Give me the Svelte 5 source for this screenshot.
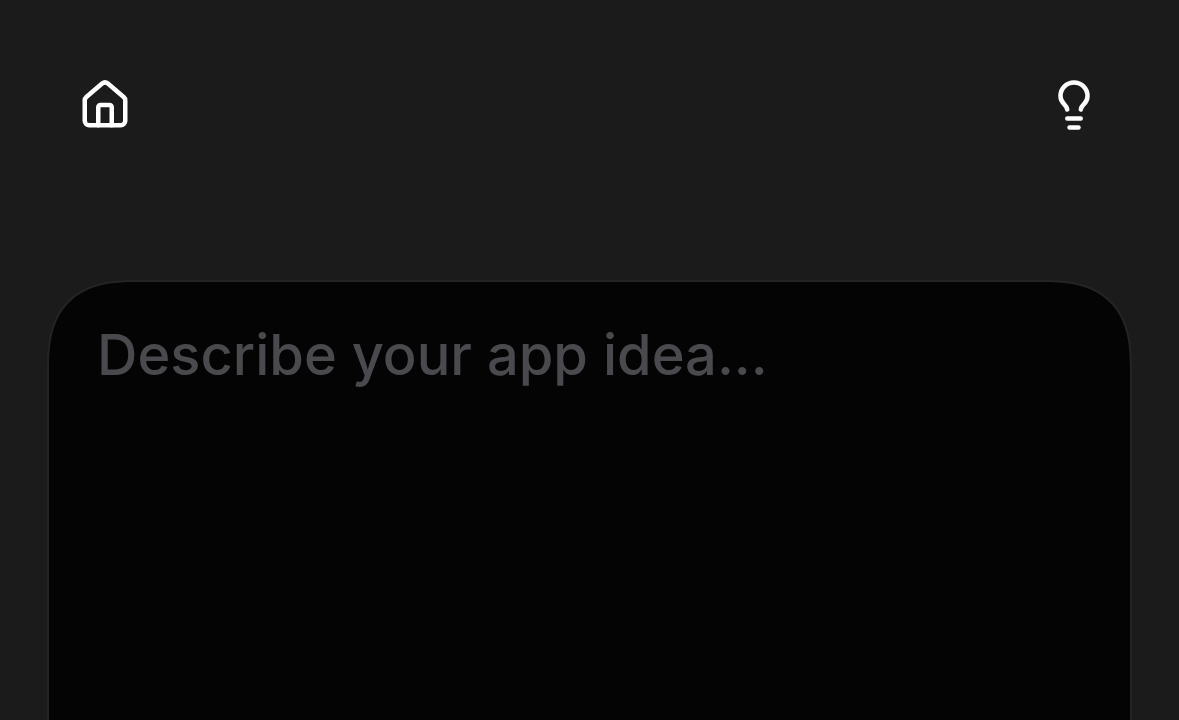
<script lang="ts">
	let idea = $state('');
</script>

<main>
	<header>
		<button type="button" aria-label="Home">
			<svg viewBox="0 0 24 24" aria-hidden="true">
				<path d="M15 21v-8a1 1 0 0 0-1-1h-4a1 1 0 0 0-1 1v8" />
				<path
					d="M3 10a2 2 0 0 1 .709-1.528l7-5.999a2 2 0 0 1 2.582 0l7 5.999A2 2 0 0 1 21 10v9a2 2 0 0 1-2 2H5a2 2 0 0 1-2-2z"
				/>
			</svg>
		</button>
		<button type="button" aria-label="Ideas">
			<svg viewBox="0 0 24 24" aria-hidden="true">
				<path
					d="M15 14c.2-1 .7-1.7 1.5-2.5 1-.9 1.5-2.2 1.5-3.5A6 6 0 0 0 6 8c0 1 .2 2.2 1.5 3.5.7.7 1.3 1.5 1.5 2.5"
				/>
				<path d="M9 18h6" />
				<path d="M10 22h4" />
			</svg>
		</button>
	</header>
	<textarea aria-label="App idea" placeholder="Describe your app idea..." bind:value={idea}></textarea>
</main>

<style>
	:global(body) {
		margin: 0;
		background-color: #1b1b1b;
	}
	main {
		display: flex;
		flex-direction: column;
		min-height: 100vh;
		box-sizing: border-box;
		padding: 78px 47px 0;
		background-color: #1b1b1b;
	}
	header {
		display: flex;
		justify-content: space-between;
		padding: 0 31px;
		margin-bottom: 148px;
	}
	button {
		display: flex;
		padding: 0;
		border: none;
		background: none;
		color: white;
		cursor: pointer;
	}
	svg {
		width: 54px;
		height: 54px;
		fill: none;
		stroke: currentColor;
		stroke-width: 2;
		stroke-linecap: round;
		stroke-linejoin: round;
	}
	textarea {
		flex: 1;
		box-sizing: border-box;
		width: 100%;
		padding: 37px 48px;
		border: 2px solid #242424;
		border-bottom: none;
		border-radius: 72px 72px 0 0;
		outline: none;
		resize: none;
		background-color: #040404;
		color: white;
		font-family: Inter, 'Liberation Sans', sans-serif;
		font-size: 56px;
		font-weight: 500;
		line-height: 72px;
	}
	textarea::placeholder {
		color: #4a494d;
		opacity: 1;
	}
	/* smoother corners where the browser can draw them */
	@supports (corner-shape: squircle) {
		textarea {
			border-radius: 90px 90px 0 0;
			corner-shape: superellipse(1.4);
		}
	}
</style>
